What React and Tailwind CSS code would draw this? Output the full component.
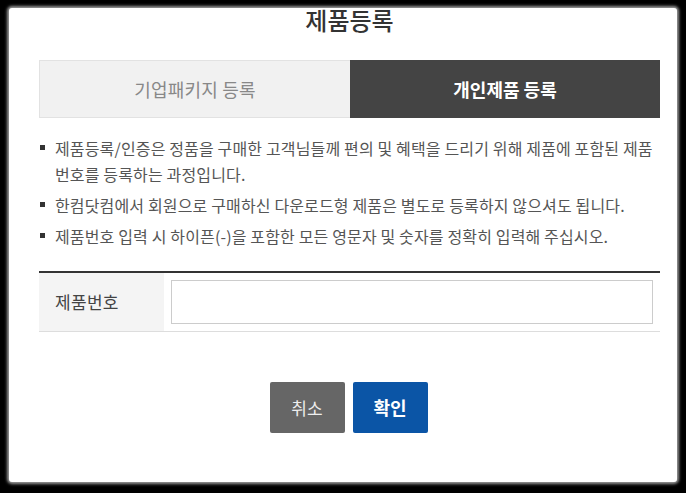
const NOTES = [
  '제품등록/인증은 정품을 구매한 고객님들께 편의 및 혜택을 드리기 위해 제품에 포함된 제품 번호를 등록하는 과정입니다.',
  '한컴닷컴에서 회원으로 구매하신 다운로드형 제품은 별도로 등록하지 않으셔도 됩니다.',
  '제품번호 입력 시 하이픈(-)을 포함한 모든 영문자 및 숫자를 정확히 입력해 주십시오.',
]

export default function App() {
  return (
    <div
      className="w-[686px] h-[493px] bg-black pl-[9px] pr-[9px] pt-[8px] pb-[11px] overflow-hidden"
      style={{ fontFamily: '"Noto Sans CJK KR", "Noto Sans", sans-serif' }}
    >
      <div className="h-full bg-white rounded-[3px] shadow-[0_0_3px_2px_#9a9a9a] flex flex-col pl-[30px] pr-[17px]">
        {/* Title */}
        <h1 className="text-center text-[24px] leading-[28px] font-medium text-[#333] -mt-[2px]">제품등록</h1>

        {/* Tabs */}
        <div className="mt-[26px] flex h-[58px]">
          <button className="flex-1 bg-[#f1f1f1] border border-[#e2e2e2] border-r-0 text-[18px] text-[#888] tracking-[0.2px]">
            기업패키지 등록
          </button>
          <button className="flex-1 bg-[#444] text-white text-[18px] font-bold">
            개인제품 등록
          </button>
        </div>

        {/* Notes */}
        <ul className="mt-[17px] flex flex-col gap-[5px]">
          {NOTES.map((note, i) => (
            <li key={i} className="flex text-[16px] leading-[26px] text-[#555] tracking-[0.15px] break-keep">
              <span className="w-[16px] shrink-0 pt-[10px] pl-[1px]">
                <span className="block w-[5px] h-[5px] bg-[#333]" />
              </span>
              <span>{note}</span>
            </li>
          ))}
        </ul>

        {/* Product number row */}
        <div className="mt-[22px] border-t-2 border-[#333] border-b border-b-[#ddd] flex h-[61px]">
          <div className="w-[125px] bg-[#f4f4f4] flex items-center pl-[16px] text-[17px] text-[#444] tracking-[0.3px]">
            제품번호
          </div>
          <div className="flex-1 flex items-center px-[7px]">
            <input className="w-full h-[44px] border border-[#ccc] outline-none px-2 text-[15px]" />
          </div>
        </div>

        {/* Buttons */}
        <div className="mt-[50px] flex justify-center gap-[8px] -ml-[2px]">
          <button className="w-[75px] h-[51px] rounded-[2px] bg-[#666] text-[#eee] text-[17px]">취소</button>
          <button className="w-[75px] h-[51px] rounded-[2px] bg-[#0b55a6] text-white text-[18px] font-bold">확인</button>
        </div>
      </div>
    </div>
  )
}
